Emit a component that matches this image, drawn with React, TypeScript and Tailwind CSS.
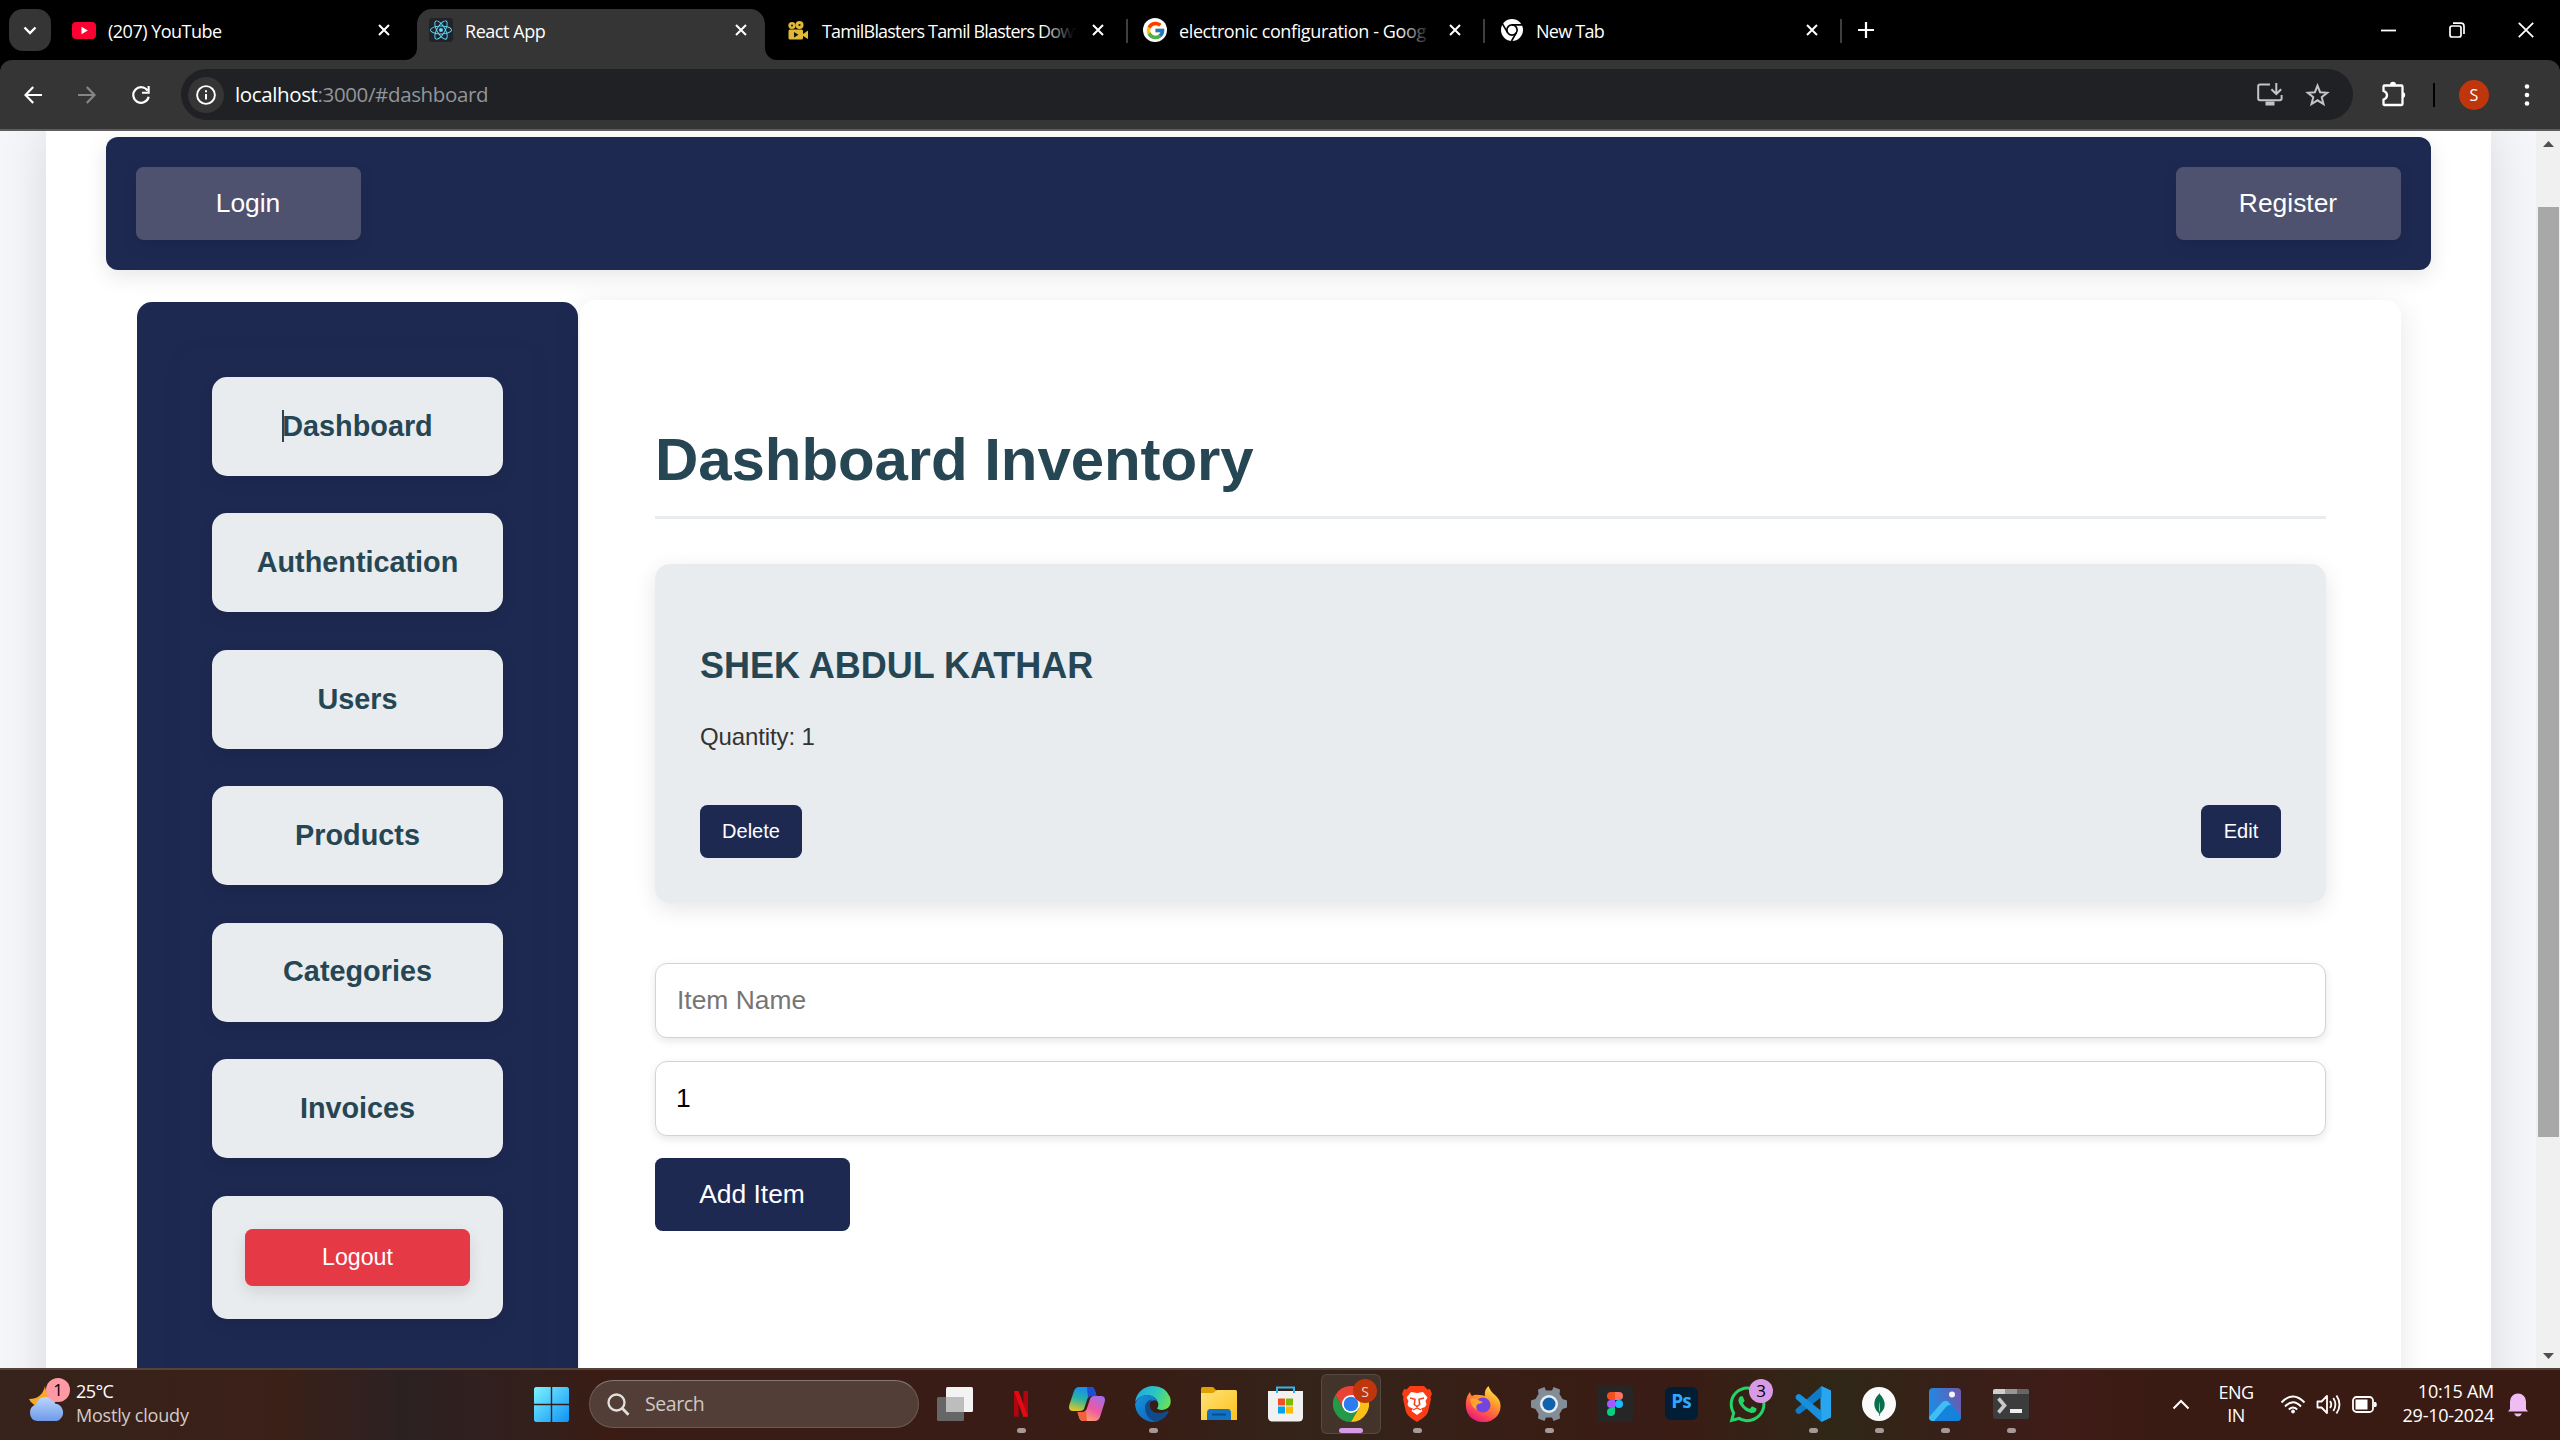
import type { ReactNode } from "react";
import { FcGoogle } from "react-icons/fc";
import { FaReact, FaWhatsapp } from "react-icons/fa";
import { SiMongodb } from "react-icons/si";

function CloseX({ className = "" }: { className?: string }) {
  return (
    <svg width="12" height="12" viewBox="0 0 12 12" className={className}>
      <path d="M1 1L11 11M11 1L1 11" stroke="#fff" strokeWidth="2" />
    </svg>
  );
}

function Tab({ icon, title, active, divider, fade, textClass }: { icon: ReactNode; title: string; active?: boolean; divider?: boolean; fade?: boolean; textClass: string }) {
  return (
    <div className={`relative mr-[9px] flex h-[51px] w-[348px] shrink-0 items-start pl-3 ${active ? "rounded-t-[15px] bg-[#353535]" : ""}`}>
      {active && (
        <>
          <svg className="absolute -left-3 bottom-0" width="12" height="12" viewBox="0 0 12 12"><path d="M12 0V12H0A12 12 0 0 0 12 0Z" fill="#353535" /></svg>
          <svg className="absolute -right-3 bottom-0" width="12" height="12" viewBox="0 0 12 12"><path d="M0 0V12H12A12 12 0 0 1 0 0Z" fill="#353535" /></svg>
        </>
      )}
      <span className="mt-[9px] flex h-6 w-6 items-center justify-center">{icon}</span>
      <span className={`relative ml-3 mt-[9px] w-[252px] whitespace-nowrap text-[18px] leading-[26px] text-white ${textClass}`}>
        {title}
        {fade && <span className="absolute inset-y-0 right-0 w-8 bg-linear-to-r from-transparent to-black" />}
      </span>
      <CloseX className="ml-[18px] mt-[15px]" />
      {divider && <span className="absolute -right-[6px] top-[10px] h-6 w-[2px] bg-[#3f3f3f]" />}
    </div>
  );
}

function ChromeMono() {
  return (
    <svg width="22" height="22" viewBox="0 0 24 24">
      <circle cx="12" cy="12" r="12" fill="#fff" />
      <circle cx="12" cy="12" r="5.6" fill="none" stroke="#000" strokeWidth="1.8" />
      <path d="M12 6.4H23M7.2 14.8L1.6 5.4M16.8 14.8L11.5 24" stroke="#000" strokeWidth="1.8" />
    </svg>
  );
}

function ChromeColor() {
  return (
    <svg width="36" height="36" viewBox="0 0 36 36">
      <path d="M2.4 9A18 18 0 0 1 33.6 9L18 9L10.2 22.5Z" fill="#ea4335" />
      <path d="M2.4 9A18 18 0 0 0 18 36L25.8 22.5L10.2 22.5Z" fill="#249a48" />
      <path d="M33.6 9A18 18 0 0 1 18 36L25.8 22.5L18 9Z" fill="#fbc116" />
      <circle cx="18" cy="18" r="9" fill="#fff" />
      <circle cx="18" cy="18" r="7.3" fill="#2a7cf0" />
    </svg>
  );
}

function TitleBar() {
  return (
    <div className="flex h-[60px] items-start bg-black pt-[9px]">
      <div className="ml-[9px] mr-[9px] flex h-[42px] w-[42px] shrink-0 items-center justify-center rounded-[14px] bg-[#353535]">
        <svg width="14" height="9" viewBox="0 0 14 9"><path d="M1.5 1.5L7 7L12.5 1.5" fill="none" stroke="#fff" strokeWidth="2.4" /></svg>
      </div>
      <Tab title="(207) YouTube" textClass="tracking-[-0.5px]" icon={
        <svg width="24" height="17" viewBox="0 0 24 17"><rect width="24" height="17" rx="4" fill="#f03" /><path d="M9.5 4.8V12.2L15.8 8.5Z" fill="#fff" /></svg>
      } />
      <Tab active title="React App" textClass="tracking-[-0.45px]" icon={
        <span className="flex h-6 w-6 items-center justify-center rounded-[3px] bg-[#20232a]"><FaReact size={22} color="#61dafb" /></span>
      } />
      <Tab title="TamilBlasters Tamil Blasters Dow" divider fade textClass="tracking-[-0.82px]" icon={
        <svg width="22" height="19" viewBox="0 0 22 19" fill="#e0ba35">
          <circle cx="5" cy="4.5" r="3.6" /><circle cx="12.5" cy="4" r="4" /><rect x="1.5" y="8.5" width="14.5" height="10" rx="1.5" /><path d="M16 13L21 9.5V18L16 15Z" />
          <g fill="#111"><circle cx="5" cy="4.5" r="1" /><circle cx="12.5" cy="4" r="1.1" /><path d="M7 11V16.4L11.5 13.7Z" /></g>
        </svg>
      } />
      <Tab title="electronic configuration - Goog" divider fade textClass="tracking-[-0.38px]" icon={
        <span className="flex h-6 w-6 items-center justify-center rounded-full bg-white"><FcGoogle size={21} /></span>
      } />
      <Tab title="New Tab" divider textClass="tracking-[-0.75px]" icon={<ChromeMono />} />
      <svg className="ml-[13px] mt-[13px]" width="16" height="16" viewBox="0 0 16 16"><path d="M8 0V16M0 8H16" stroke="#fff" strokeWidth="2.2" /></svg>
      <div className="ml-auto mr-[26px] flex items-center gap-[53px] pt-[13px]">
        <svg width="15" height="15" viewBox="0 0 15 15"><path d="M0 7.5H15" stroke="#fff" strokeWidth="1.8" /></svg>
        <svg width="16" height="16" viewBox="0 0 16 16" fill="none" stroke="#fff" strokeWidth="1.7"><rect x="1" y="4" width="11" height="11" rx="2" /><path d="M4 1.2H12Q15 1.2 15 4.2V12" /></svg>
        <svg width="16" height="16" viewBox="0 0 16 16"><path d="M.8 .8L15.2 15.2M15.2 .8L.8 15.2" stroke="#fff" strokeWidth="1.8" /></svg>
      </div>
    </div>
  );
}

function Toolbar() {
  return (
    <div className="bg-black">
      <div className="flex h-[71px] items-start rounded-t-[12px] border-b-2 border-[#5d5d5d] bg-[#353535] pt-[9px]">
        <div className="flex h-[51px] w-[181px] shrink-0 items-center gap-9 pl-6">
          <svg width="18" height="18" viewBox="0 0 18 18" fill="none" stroke="#fff" strokeWidth="2.2"><path d="M18 9H1.8M9.2 1L1.5 9L9.2 17" /></svg>
          <svg width="18" height="18" viewBox="0 0 18 18" fill="none" stroke="#868686" strokeWidth="2.2"><path d="M0 9H16.2M8.8 1L16.5 9L8.8 17" /></svg>
          <svg width="18" height="18" viewBox="0 0 18 18"><path d="M15.6 4.7A7.8 7.8 0 1 0 16.7 10.8" fill="none" stroke="#fff" strokeWidth="2.2" /><path d="M17.7 0V7.8H10V5.7H15.6V0Z" fill="#fff" /></svg>
        </div>
        <div className="flex h-[51px] w-[2172px] shrink-0 items-center rounded-full bg-[#202124] pl-[7px]">
          <span className="flex h-9 w-9 items-center justify-center rounded-full bg-[#353535]">
            <svg width="20" height="20" viewBox="0 0 20 20"><circle cx="10" cy="10" r="8.9" fill="none" stroke="#fff" strokeWidth="1.9" /><path d="M10 9V14.6M10 5.2V7.3" stroke="#fff" strokeWidth="2" /></svg>
          </span>
          <span className="mt-[-2px] ml-[11px] text-[20.5px] leading-[30px] tracking-[-0.37px] text-white">localhost<span className="text-[#92959a]">:3000/#dashboard</span></span>
          <svg className="ml-auto" width="26" height="23" viewBox="0 0 26 23" fill="none" stroke="#c2c4c7" strokeWidth="2"><path d="M13 1.5H3Q1.2 1.5 1.2 3.3V15.5Q1.2 17.3 3 17.3H22.8Q24.6 17.3 24.6 15.5V12" /><path d="M8.5 20.5H17.5" strokeWidth="4" /><path d="M19.3 0V10.6M14.4 6.2L19.3 11L24.2 6.2" /></svg>
          <svg className="ml-[22px] mr-[23px]" width="25" height="24" viewBox="0 0 25 24"><path d="M12.5 2.6L15.1 9.2L22.2 9.7L16.7 14.2L18.5 21.1L12.5 17.3L6.5 21.1L8.3 14.2L2.8 9.7L9.9 9.2Z" fill="none" stroke="#c2c4c7" strokeWidth="2" /></svg>
        </div>
        <div className="flex h-[51px] flex-1 items-center pl-7">
          <svg className="-mt-[2px]" width="26" height="26" viewBox="0 0 26 26"><path d="M3.5 4.5H20.5Q21.5 4.5 21.5 5.5V23Q21.5 24 20.5 24H3.5Q2.5 24 2.5 23V18.5Q6 17.5 6 14.3Q6 11 2.5 10V5.5Q2.5 4.5 3.5 4.5Z" fill="none" stroke="#fff" strokeWidth="2.3" /><path d="M9 4A3 3.2 0 0 1 15 4ZM22 11A3 3.2 0 0 1 22 17.2Z" fill="#fff" /></svg>
          <span className="ml-[26px] h-6 w-[2px] bg-black" />
          <span className="ml-[24px] flex h-[30px] w-[30px] items-center justify-center rounded-full bg-[#bf360c] text-[16px] text-white">S</span>
          <svg className="ml-[35px]" width="6" height="22" viewBox="0 0 6 22" fill="#fff"><circle cx="3" cy="2.5" r="2.3" /><circle cx="3" cy="11" r="2.3" /><circle cx="3" cy="19.5" r="2.3" /></svg>
        </div>
      </div>
    </div>
  );
}

const navItems = ["Dashboard", "Authentication", "Users", "Products", "Categories", "Invoices"];

function Sidebar() {
  return (
    <div className="mt-[2px] h-[1100px] w-[441px] shrink-0 rounded-[15px] bg-[#1e2952] px-[45px] pt-[45px]">
      <div className="h-[1055px] rounded-[15px] px-[30px] pt-[30px] shadow-[0_6px_22px_rgba(0,0,0,0.06)]">
        <div className="flex flex-col gap-[37.4px]">
          {navItems.map((n, i) => (
            <div key={n} className="flex h-[99px] w-[291px] items-center justify-center rounded-[15px] bg-[#e8ecef] text-[28.8px] font-bold text-[#264653] shadow-[0_6px_15px_rgba(0,0,0,0.1)]">
              <span className="relative">
                {i === 0 && <span className="absolute top-[5px] left-0 h-8 w-[2px] bg-[#264653]" />}
                {n}
              </span>
            </div>
          ))}
          <div className="mt-[0.6px] flex h-[123px] w-[291px] items-center justify-center rounded-[15px] bg-[#e8ecef] shadow-[0_6px_15px_rgba(0,0,0,0.1)]">
            <button className="h-[57px] w-[225px] rounded-[7.5px] bg-[#e63946] text-[23.2px] text-white shadow-[0_6px_15px_rgba(0,0,0,0.1)]">Logout</button>
          </div>
        </div>
      </div>
    </div>
  );
}

function DashboardPanel() {
  return (
    <div className="ml-[2px] h-[1100px] w-[1821px] shrink-0 rounded-[15px] bg-white px-[75px] pt-[119px] shadow-[0_6px_30px_rgba(0,0,0,0.1)]">
      <h1 className="flex h-[100px] items-start border-b-[3px] border-[#e8ecef] pt-px text-[60px] leading-[80px] font-bold tracking-[-0.08px] text-[#264653]">Dashboard Inventory</h1>
      <div className="mt-[45px] h-[339px] rounded-[15px] bg-[#e8ecef] px-[45px] pt-[82px] shadow-[0_6px_22px_rgba(0,0,0,0.1)]">
        <h2 className="text-[36px] leading-[40px] font-bold text-[#264653]">SHEK ABDUL KATHAR</h2>
        <p className="mt-[37px] text-[24px] leading-[28px] tracking-[-0.12px] text-[#333]">Quantity: 1</p>
        <div className="mt-[54px] flex justify-between text-[20px] text-white">
          <button className="h-[53px] w-[102px] rounded-[7.5px] bg-[#1e2952] pb-[2px]">Delete</button>
          <button className="h-[53px] w-[80px] rounded-[7.5px] bg-[#1e2952] pb-[2px]">Edit</button>
        </div>
      </div>
      <div className="mt-[60px] flex flex-col gap-[23px] text-[26.4px]">
        <div className="flex h-[75px] items-center rounded-[12px] border border-[#ced4da] bg-white pl-[21px] text-[#757575] shadow-[0_3px_9px_rgba(0,0,0,0.1)]">Item Name</div>
        <div className="flex h-[75px] items-center rounded-[12px] border border-[#ced4da] bg-white pl-[20px] text-black shadow-[0_3px_9px_rgba(0,0,0,0.1)]">1</div>
      </div>
      <button className="mt-[22px] h-[73px] w-[195px] rounded-[7.5px] bg-[#1e2952] pr-px text-[26.4px] text-white">Add Item</button>
    </div>
  );
}

function Page() {
  return (
    <div className="flex h-[1237px] overflow-hidden bg-[#f4f6f9] font-['Liberation_Sans',sans-serif]">
      <div className="w-[2536px] overflow-hidden pl-[46px]">
        <div className="h-[1500px] w-[2445px] bg-white pt-[6px] pr-[60px] pl-[60px] shadow-[0_0_45px_rgba(0,0,0,0.12)]">
          <div className="flex h-[133px] items-center justify-between rounded-[12px] bg-[#1e2952] px-[30px] text-[26.4px] text-white shadow-[0_6px_22px_rgba(0,0,0,0.1)]">
            <button className="h-[73px] w-[225px] rounded-[7.5px] bg-[#4e526e] pr-px shadow-[0_6px_15px_rgba(0,0,0,0.1)]">Login</button>
            <button className="h-[73px] w-[225px] rounded-[7.5px] bg-[#4e526e] pr-px shadow-[0_6px_15px_rgba(0,0,0,0.1)]">Register</button>
          </div>
          <div className="flex px-[31px] pt-[30px]">
            <Sidebar />
            <DashboardPanel />
          </div>
        </div>
      </div>
      <div className="flex w-6 flex-col items-center bg-[#f0f0f0] pt-[10px]">
        <svg width="11" height="6" viewBox="0 0 11 6"><path d="M0 6L5.5 0L11 6Z" fill="#505050" /></svg>
        <div className="mt-[60px] h-[930px] w-[21px] bg-[#a8a8a8]" />
        <svg className="mt-[216px]" width="11" height="6" viewBox="0 0 11 6"><path d="M0 0L5.5 6L11 0Z" fill="#505050" /></svg>
      </div>
    </div>
  );
}

function TaskIcon({ children, open, active }: { children: ReactNode; open?: boolean; active?: boolean }) {
  return (
    <div className={`relative mx-[3px] flex h-[60px] w-[60px] shrink-0 items-center justify-center ${active ? "rounded-[6px] border border-white/10 bg-white/8" : ""}`}>
      {children}
      {open && <span className="absolute bottom-px h-[5px] w-[9px] rounded-full bg-[#a59a96]" />}
      {active && <span className="absolute bottom-0 h-[5px] w-6 rounded-full bg-[#d899e6]" />}
    </div>
  );
}

function Weather() {
  return (
    <div className="flex w-[528px] shrink-0 items-center pl-[28px]">
      <div className="relative -mt-[10px] h-[44px] w-[41px]">
        <svg className="absolute left-0 top-[1px]" width="38" height="43" viewBox="0 0 38 43">
          <defs><linearGradient id="cloud" x1="0" y1="0" x2="0" y2="1"><stop offset="0" stopColor="#b9d6ff" /><stop offset="1" stopColor="#6f9ae8" /></linearGradient></defs>
          <path d="M17 7Q18 18 30 19Q26 28 14 28Q4 27 1 20Q14 20 17 7Z" fill="#f9a825" />
          <path d="M9 42A8.5 8.5 0 0 1 8 25.5A10 10 0 0 1 27 24.5A9 9 0 0 1 29 42Z" fill="url(#cloud)" />
        </svg>
        <span className="absolute top-0 left-[18px] flex h-6 w-6 items-center justify-center rounded-full bg-[#ff99a4] text-[17px] text-black">1</span>
      </div>
      <div className="-mt-[5px] ml-[7px] text-[18px] leading-6">
        <div className="tracking-[-0.6px] text-white">25°C</div>
        <div className="tracking-[-0.2px] text-[#d3cbc8]">Mostly cloudy</div>
      </div>
    </div>
  );
}

function Taskbar() {
  return (
    <div className="flex h-[72px] items-stretch border-t-2 border-[#55423c] bg-[linear-gradient(90deg,#36231b_0px,#3b2018_280px,#2c2122_400px,#341f1b_540px,#3a1c15_600px,#381d15_1150px,#33241a_1320px,#381e16_1500px,#3a1c15_1680px,#302717_1840px,#381f18_1960px,#3f1c17_2060px,#3a1b14_2160px,#3a1b14_2560px)] font-['Open_Sans','Noto_Sans',sans-serif]">
      <Weather />
      <div className="flex h-[68px] items-center">
        <svg className="ml-[6px]" width="35" height="35" viewBox="0 0 35 35">
          <defs><linearGradient id="win" x1="0" y1="0" x2="1" y2="1"><stop offset="0" stopColor="#7df3ff" /><stop offset="1" stopColor="#0d93f5" /></linearGradient></defs>
          <path d="M1.5 0H16.8V16.8H0V1.5ZM18.2 0H33.5L35 1.5V16.8H18.2ZM0 18.2H16.8V35H1.5L0 33.5ZM18.2 18.2H35V33.5L33.5 35H18.2Z" fill="url(#win)" />
        </svg>
        <div className="mr-[3px] ml-5 flex h-[48px] w-[330px] items-center rounded-full border border-white/15 border-t-white/30 bg-[#523e36] pl-[17px] text-[19.5px] tracking-[-0.4px] text-[#cfc8c5]">
          <svg width="23" height="23" viewBox="0 0 23 23" fill="none" stroke="#e4dfdd" strokeWidth="2.3"><circle cx="9.5" cy="9.5" r="8" /><path d="M15.2 15.2L21.5 21.8" strokeWidth="2.8" /></svg>
          <span className="-mt-px ml-[15px]">Search</span>
        </div>
      </div>
      <div className="flex h-[68px] items-center">
        <TaskIcon>
          <svg width="36" height="34" viewBox="0 0 36 34"><rect x="0" y="10" width="27" height="24" rx="1.5" fill="#666" /><rect x="9" y="0" width="27" height="25" rx="1.5" fill="#f3f3f3" /><rect x="9" y="10" width="18" height="15" fill="#bdbdbd" /></svg>
        </TaskIcon>
        <TaskIcon open>
          <svg width="14" height="26" viewBox="0 0 14 26"><path d="M0 0H4.6V26L0 25.6ZM9.4 0H14V25.6L9.4 26Z" fill="#b1060f" /><path d="M0 0H4.6L14 25.6L9.4 26Z" fill="#e50914" /></svg>
        </TaskIcon>
        <TaskIcon>
          <svg width="36" height="34" viewBox="0 0 36 34">
            <defs>
              <linearGradient id="cpa" x1="0.4" y1="0" x2="0.1" y2="1"><stop offset="0" stopColor="#1b8df0" /><stop offset=".45" stopColor="#27b3a5" /><stop offset="1" stopColor="#f2c81d" /></linearGradient>
              <linearGradient id="cpb" x1="0.8" y1="0" x2="0.2" y2="1"><stop offset="0" stopColor="#a66be8" /><stop offset=".5" stopColor="#ee5aa0" /><stop offset="1" stopColor="#ffb068" /></linearGradient>
            </defs>
            <path d="M10 0H22Q25 0 26 4L27.5 9H22Q19 9 18 13L15 22Q14 24 11 24H4Q-1 24 .3 18L5 4Q6.500 0 10 0Z" fill="url(#cpa)" />
            <path d="M18 0H22Q25 0 26 4L27.500 9H22Q20 9 19 11Z" fill="#1a4fd6" />
            <path d="M26 34H14Q11 34 10 30L8.500 25H14Q17 25 18 21L21 12Q22 9 25 9H32Q37 9 35.700 15L31 30Q29.500 34 26 34Z" fill="url(#cpb)" />
            <path d="M18 34H14Q11 34 10 30L8.500 25H14Q16 25 17 23Z" fill="#f4603c" />
          </svg>
        </TaskIcon>
        <TaskIcon open>
          <svg width="36" height="36" viewBox="0 0 36 36">
            <defs>
              <linearGradient id="eda" x1="0" y1="0.2" x2="1" y2="0.5"><stop offset="0" stopColor="#1ea8e6" /><stop offset=".55" stopColor="#2cc6c0" /><stop offset="1" stopColor="#66e05a" /></linearGradient>
              <linearGradient id="edb" x1="0" y1="0" x2="1" y2="1"><stop offset="0" stopColor="#1893dd" /><stop offset="1" stopColor="#0b5fb4" /></linearGradient>
            </defs>
            <path d="M.2 16A18 18 0 0 1 18 0Q30 0 35 11Q37.500 20 31 23Q25 25 22 22.500Q24 20 23 16.500Q20.500 9.500 12 9Q4 9.500 .2 16Z" fill="url(#eda)" />
            <path d="M0 18Q3 9 12 9Q20 9.500 22.500 15Q17 13 14.500 17Q12 22 15 28Q18.500 34 25 34.500Q20 37 14 35.500Q1 31 0 18Z" fill="url(#edb)" />
            <path d="M10 21Q11 14 17 13.500Q13.500 18 15.500 22.500Q18 27.500 25 27Q29 26.500 32.500 24.800Q34.500 24.500 33 27.500Q28 35 20 35.800Q10 32 10 21Z" fill="#114a8b" />
          </svg>
        </TaskIcon>
        <TaskIcon>
          <svg width="36" height="34" viewBox="0 0 36 34">
            <defs><linearGradient id="fold" x1="0" y1="0" x2="1" y2="1"><stop offset="0" stopColor="#ffe27a" /><stop offset="1" stopColor="#fcc21b" /></linearGradient></defs>
            <path d="M0 1.500Q0 0 1.500 0H12L15.500 3.500V8H0Z" fill="#e0a100" /><path d="M0 6H12L16 3H34.500Q36 3 36 4.500V33H0Z" fill="url(#fold)" />
            <path d="M6 33V26Q6 22 9.500 22H26.500Q30 22 30 26V33Z" fill="#1273c4" /><path d="M11 27.500H25" stroke="#0b4d8c" strokeWidth="2" />
          </svg>
        </TaskIcon>
        <TaskIcon>
          <svg width="35" height="36" viewBox="0 0 35 36">
            <path d="M0 5H35V31Q35 35.500 30.500 35.500H4.500Q0 35.500 0 31Z" fill="#f1f1f1" /><path d="M9 7V1.500H26V7" fill="none" stroke="#35b4ea" strokeWidth="2" />
            <path d="M10 12.500H17V19.500H10Z" fill="#f25022" /><path d="M18 12.500H25V19.500H18Z" fill="#7fba00" /><path d="M10 20.500H17V27.500H10Z" fill="#00a4ef" /><path d="M18 20.500H25V27.500H18Z" fill="#ffb900" />
          </svg>
        </TaskIcon>
        <TaskIcon active>
          <ChromeColor />
          <span className="absolute top-[4px] right-[3px] flex h-6 w-6 items-center justify-center rounded-full bg-[#bf360c] text-[14px] text-[#e9d2ca]">S</span>
        </TaskIcon>
        <TaskIcon open>
          <svg width="30" height="36" viewBox="0 0 30 36">
            <path d="M8 0H22L25.500 3.500L28 3L30 8L28.500 11L29 13L26 26Q25 29 21 32L15 36L9 32Q5 29 4 26L1 13L1.500 11L0 8L2 3L4.500 3.500Z" fill="#fb3c14" />
            <path d="M9 6L15 7L21 6L25.500 11.500L23.500 15L24.500 18.500L23 21L19 22.500L20.500 25L15 29L9.500 25L11 22.500L7 21L5.500 18.500L6.500 15L4.500 11.500Z" fill="#fff" />
            <path d="M8 12L13 13.200L12.300 18.500L15 20.500L17.700 18.500L17 13.200L22 12" fill="none" stroke="#fb3c14" strokeWidth="1.500" />
            <path d="M11 24L15 22L19 24" fill="none" stroke="#fb3c14" strokeWidth="1.300" />
          </svg>
        </TaskIcon>
        <TaskIcon>
          <svg width="36" height="36" viewBox="0 0 36 36">
            <defs><linearGradient id="ff" x1="0.85" y1="0" x2="0.3" y2="1"><stop offset="0" stopColor="#fff04a" /><stop offset=".4" stopColor="#ff9a2a" /><stop offset=".75" stopColor="#ff4a4f" /><stop offset="1" stopColor="#e31587" /></linearGradient></defs>
            <path d="M5 6Q5 8.500 7 10Q10 8 14 9Q17 9 20 10Q19 4 23.500 0Q25 5 30 9Q36 14 35.500 21A17 15.500 0 0 1 1 20Q0 12 5 6Z" fill="url(#ff)" />
            <circle cx="18" cy="19" r="7.500" fill="#7444e0" />
            <path d="M5 13Q10 11 14 14.500L18 16Q15 18 13 18Q10 20 12 24Q6 21 5 13Z" fill="#ffa42c" />
          </svg>
        </TaskIcon>
        <TaskIcon open>
          <svg width="36" height="34" viewBox="0 0 36 34">
            <path d="M13.500 0L15 3.500H21L22.500 0L29 2.500L28.500 7L31.500 12L36 13.500V20.500L31.500 22L28.500 27L29 31.500L22.500 34L21 30.500H15L13.500 34L7 31.500L7.500 27L4.500 22L0 20.500V13.500L4.500 12L7.500 7L7 2.500Z" fill="#838d97" />
            <circle cx="18" cy="17" r="9" fill="#e9edf0" /><circle cx="18" cy="17" r="6.500" fill="#0f62ad" />
          </svg>
        </TaskIcon>
        <TaskIcon>
          <span className="flex h-9 w-9 items-center justify-center rounded-[3px] bg-[#262626]">
            <svg width="16" height="24" viewBox="0 0 16 24"><path d="M8 0H4A4 4 0 0 0 4 8H8Z" fill="#f24e1e" /><path d="M8 0H12A4 4 0 0 1 12 8H8Z" fill="#ff7262" /><path d="M8 8H4A4 4 0 0 0 4 16H8Z" fill="#a259ff" /><circle cx="12" cy="12" r="4" fill="#1abcfe" /><path d="M8 16H4A4 4 0 1 0 8 20Z" fill="#0acf83" /></svg>
          </span>
        </TaskIcon>
        <TaskIcon>
          <span className="-mt-[2px] flex h-[33px] w-[33px] items-center justify-center rounded-[6px] bg-[#001e36] pb-[3px] text-[19px] font-bold tracking-[-1px] text-[#31a8ff]">Ps</span>
        </TaskIcon>
        <TaskIcon>
          <FaWhatsapp size={41} color="#25d366" />
          <span className="absolute top-[5px] right-[4px] flex h-6 w-6 items-center justify-center rounded-full bg-[#d899e6] text-[17px] text-black">3</span>
        </TaskIcon>
        <TaskIcon open>
          <svg width="36" height="36" viewBox="0 0 36 36">
            <path d="M26.500 0L36 4.500V31.500L26.500 36L25.500 34V2Z" fill="#28a7f0" />
            <path d="M26.500 0L.6 23.500V26L3 28L5 27.800L26.500 11Z" fill="#0f7cc9" />
            <path d="M26.500 36L.6 12.500V10L3 8L5 8.200L26.500 25Z" fill="#1a90dc" />
          </svg>
        </TaskIcon>
        <TaskIcon open>
          <span className="flex h-[34px] w-[34px] items-center justify-center rounded-full bg-[#fafafa]"><SiMongodb size={23} color="#0b6e4a" /></span>
        </TaskIcon>
        <TaskIcon open>
          <svg width="32" height="33" viewBox="0 0 32 33">
            <defs>
              <linearGradient id="photoSky" x1="0" y1="0.6" x2="1" y2="0.4"><stop offset="0" stopColor="#1a8ce8" /><stop offset="1" stopColor="#6a5cb0" /></linearGradient>
              <clipPath id="photoFrame"><rect width="32" height="33" rx="4" /></clipPath>
            </defs>
            <g clipPath="url(#photoFrame)">
              <rect width="32" height="33" fill="url(#photoSky)" />
              <path d="M5 33L16 18L21 15L33 29V33Z" fill="#1583db" />
              <path d="M-1 30L13 14.500Q16 11.500 19.500 14L22 17Q19 16.500 17 19L5 33H-1Z" fill="#41bdf5" />
            </g>
            <circle cx="23" cy="6.500" r="3" fill="#f4f4f8" />
          </svg>
        </TaskIcon>
        <TaskIcon open>
          <svg width="36" height="30" viewBox="0 0 36 30">
            <rect width="36" height="30" rx="2" fill="#3c3c3c" /><path d="M0 2Q0 0 2 0H12V5H0Z" fill="#cfcfcf" /><path d="M12 0H24V5H12Z" fill="#969696" /><path d="M24 0H34Q36 0 36 2V5H24Z" fill="#666" />
            <path d="M5.500 9.500L11.500 16.500L5.500 23.500" fill="none" stroke="#c9c9c9" strokeWidth="3.600" /><rect x="17" y="20" width="12" height="4" fill="#eee" />
          </svg>
        </TaskIcon>
      </div>
      <div className="ml-auto flex h-[69px] items-center pr-[32px] text-white">
        <svg className="-mt-px" width="18" height="11" viewBox="0 0 18 11"><path d="M1.500 9.500L9 2L16.500 9.500" fill="none" stroke="#fff" strokeWidth="2" /></svg>
        <div className="-mt-[2px] ml-[22px] w-[48px] text-center text-[18px] leading-[23px] tracking-[-0.5px]">ENG<br />IN</div>
        <svg className="-mt-px ml-[20px]" width="26" height="19" viewBox="0 0 26 19" fill="none" stroke="#fff" strokeWidth="1.900"><path d="M1.500 7.500Q13 -4.500 24.500 7.500M5 11.500Q13 3 21 11.500M8.800 14.500Q13 10.500 17.200 14.500" /><circle cx="13" cy="16.500" r="1.500" fill="#fff" strokeWidth="1" /></svg>
        <svg className="-mt-px ml-[10px]" width="26" height="21" viewBox="0 0 26 21" fill="none" stroke="#fff" strokeWidth="1.800"><path d="M1.500 7.500H5.500L11 2V19L5.500 13.500H1.500Z" strokeLinejoin="round" /><path d="M14 7Q16.500 10.500 14 14M17.300 4Q21.500 10.500 17.300 17M20.500 1.500Q26.500 10.500 20.500 19.500" /></svg>
        <svg className="-mt-px ml-[10px]" width="25" height="17" viewBox="0 0 25 17"><rect x="1" y="1" width="20" height="15" rx="3.500" fill="none" stroke="#fff" strokeWidth="1.800" /><rect x="3.500" y="3.500" width="12" height="10" fill="#fff" /><path d="M22 6H23.500Q24.800 6 24.800 8.500Q24.800 11 23.500 11H22Z" fill="#fff" /></svg>
        <div className="-mt-[3px] ml-[23px] w-[94px] text-right text-[18px] leading-6 tracking-[-0.25px] whitespace-nowrap">10:15 AM<br />29-10-2024</div>
        <svg className="ml-[14px]" width="20" height="24" viewBox="0 0 20 24" fill="#efbdf3"><path d="M2 16V8.500A8 8 0 0 1 18 8.500V16L20 18.500H0ZM6 20.500H14Q12.500 23.500 10 23.500Q7.500 23.500 6 20.500Z" /></svg>
      </div>
    </div>
  );
}

export default function App() {
  return (
    <div className="h-[1440px] w-[2560px] overflow-hidden font-['Open_Sans','Noto_Sans',sans-serif]">
      <TitleBar />
      <Toolbar />
      <Page />
      <Taskbar />
    </div>
  );
}
